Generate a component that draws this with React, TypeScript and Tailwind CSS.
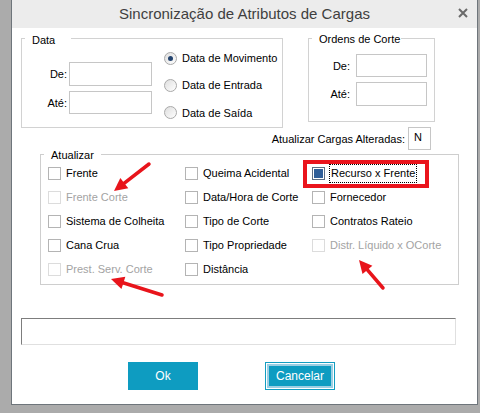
import React from "react"

type Item = { label: string; disabled?: boolean; checked?: boolean; highlight?: boolean }

const col1: Item[] = [
  { label: "Frente" },
  { label: "Frente Corte", disabled: true },
  { label: "Sistema de Colheita" },
  { label: "Cana Crua" },
  { label: "Prest. Serv. Corte", disabled: true },
]

const col2: Item[] = [
  { label: "Queima Acidental" },
  { label: "Data/Hora de Corte" },
  { label: "Tipo de Corte" },
  { label: "Tipo Propriedade" },
  { label: "Distância" },
]

const col3: Item[] = [
  { label: "Recurso x Frente", checked: true, highlight: true },
  { label: "Fornecedor" },
  { label: "Contratos Rateio" },
  { label: "Distr. Líquido x OCorte", disabled: true },
]

const Checkbox = ({ item }: { item: Item }) => (
  <div className="relative flex h-[24px] items-center gap-[5px]">
    {item.checked ? (
      <span className="box-border flex h-[13px] w-[13px] border border-[#5d6d82] bg-white p-[1px]">
        <span className="h-full w-full bg-[#2f5e98]" />
      </span>
    ) : (
      <span
        className={`box-border h-[13px] w-[13px] border bg-white ${
          item.disabled ? "border-[#dcdcdc]" : "border-[#b4b4b4]"
        }`}
      />
    )}
    {item.highlight ? (
      <span className="-ml-[1px] border border-dotted border-black px-[1px] leading-[17px] text-black">
        {item.label}
      </span>
    ) : (
      <span className={item.disabled ? "text-[#a3a3a3]" : "text-black"}>{item.label}</span>
    )}
    {item.highlight && (
      <span className="pointer-events-none absolute -left-[9px] -top-[1px] h-[28px] w-[126px] border-4 border-[#ea141c]" />
    )}
  </div>
)

const Radio = ({ label, selected }: { label: string; selected?: boolean }) => (
  <div className="flex items-center gap-[5px]">
    <span className="flex h-[13px] w-[13px] items-center justify-center rounded-full border border-[#a9a9a9] bg-gradient-to-br from-[#dedede] to-white">
      {selected && <span className="h-[5px] w-[5px] rounded-full bg-[#23436e]" />}
    </span>
    <span className="text-black">{label}</span>
  </div>
)

const Field = ({ w, h = 23 }: { w: string; h?: number }) => (
  <div className={`${w} ${h === 24 ? "h-[24px]" : "h-[23px]"} border border-[#c6c6c6] bg-white`} />
)

// arrow from tail to tip, head drawn as triangle
const Arrow = ({ x1, y1, x2, y2 }: { x1: number; y1: number; x2: number; y2: number }) => {
  const dx = x2 - x1
  const dy = y2 - y1
  const len = Math.sqrt(dx * dx + dy * dy)
  const ux = dx / len
  const uy = dy / len
  const hl = 13
  const hw = 6.5
  const bx = x2 - ux * hl
  const by = y2 - uy * hl
  const pts = `${x2},${y2} ${bx - uy * hw},${by + ux * hw} ${bx + uy * hw},${by - ux * hw}`
  return (
    <g>
      <line x1={x1} y1={y1} x2={bx + ux * 2} y2={by + uy * 2} stroke="#e8141b" strokeWidth={3.5} strokeLinecap="round" />
      <polygon points={pts} fill="#e8141b" />
    </g>
  )
}

export default function App() {
  return (
    <div className="relative h-[413px] w-[480px] overflow-hidden bg-[#ababab] pl-[11px] font-['Liberation_Sans',Arial,sans-serif] text-[11px] leading-[14px]">
      <div className="flex h-[405px] w-[467px] flex-col border-x border-b border-[#6e757b] bg-white">
        {/* Title bar */}
        <div className="relative flex h-[28px] shrink-0 items-center justify-center bg-[#ececec]">
          <span className="text-[15px] text-[#3f3f3f]">Sincronização de Atributos de Cargas</span>
          <svg className="absolute right-[9px] top-[8px]" width="10" height="10" viewBox="0 0 10 10">
            <path d="M1 1 L9 9 M9 1 L1 9" stroke="#6a6a6a" strokeWidth="2" />
          </svg>
        </div>

        {/* Data + Ordens */}
        <div className="mt-[10px] flex items-start">
          <div className="relative ml-[9px] flex h-[90px] w-[262px] border border-[#d2d2d2]">
            <span className="absolute -top-[6px] left-[3px] bg-white pl-[7px] pr-[16px] text-black">Data</span>
            <div className="flex flex-col gap-[5px] pt-[23px]">
              <div className="flex items-center gap-[2px]">
                <span className="w-[45px] text-right">De:</span>
                <Field w="w-[83px]" h={24} />
              </div>
              <div className="flex items-center gap-[2px]">
                <span className="w-[45px] text-right">Até:</span>
                <Field w="w-[83px]" />
              </div>
            </div>
            <div className="ml-[12px] flex flex-col pt-[6px]">
              <div className="flex h-[27px] items-center">
                <Radio label="Data de Movimento" selected />
              </div>
              <div className="flex h-[28px] items-center">
                <Radio label="Data de Entrada" />
              </div>
              <div className="flex h-[29px] items-center">
                <Radio label="Data de Saída" />
              </div>
            </div>
          </div>

          <div className="relative ml-[25px] flex h-[84px] w-[127px] flex-col gap-[5px] border border-[#d2d2d2] pt-[15px]">
            <span className="absolute -top-[7px] left-[3px] bg-white pl-[7px] pr-[1px] text-black">Ordens de Corte</span>
            <div className="flex items-center gap-[6px]">
              <span className="w-[41px] text-right">De:</span>
              <Field w="w-[71px]" />
            </div>
            <div className="flex items-center gap-[6px]">
              <span className="w-[41px] text-right">Até:</span>
              <Field w="w-[71px]" h={24} />
            </div>
          </div>
        </div>

        {/* Atualizar Cargas Alteradas */}
        <div className="-mt-[1px] flex items-center justify-end gap-[3px] pr-[46px]">
          <span className="text-black">Atualizar Cargas Alteradas:</span>
          <div className="h-[23px] w-[23px] border border-[#c6c6c6] pl-[5px] pt-[2px] text-black">N</div>
        </div>

        {/* Atualizar group */}
        <div className="relative ml-[28px] mt-[4px] h-[131px] w-[419px] border border-[#cecece] pl-[7px] pt-[6px]">
          <span className="absolute -top-[7px] left-[3px] bg-white px-[7px] text-black">Atualizar</span>
          <div className="flex">
            <div className="flex w-[137px] flex-col">
              {col1.map((it) => (
                <Checkbox key={it.label} item={it} />
              ))}
            </div>
            <div className="flex w-[127px] flex-col">
              {col2.map((it) => (
                <Checkbox key={it.label} item={it} />
              ))}
            </div>
            <div className="flex flex-col">
              {col3.map((it) => (
                <Checkbox key={it.label} item={it} />
              ))}
            </div>
          </div>
        </div>

        {/* Message box */}
        <div className="ml-[9px] mt-[33px] h-[27px] w-[435px] border border-b-[#e0e0e0] border-l-[#7d7d7d] border-r-[#e0e0e0] border-t-[#7d7d7d] bg-white" />

        {/* Buttons */}
        <div className="ml-[116px] mt-[17px] flex gap-[67px]">
          <button className="flex h-[28px] w-[70px] items-center justify-center bg-[#0e9cc1] text-[12px] text-white">
            Ok
          </button>
          <button className="h-[28px] w-[70px] border border-[#139dc1] bg-white p-[1px]">
            <span className="flex h-full w-full items-center justify-center border-2 border-[#9ccfe3] bg-[#0e9cc1] text-[12px] text-white">
              Cancelar
            </span>
          </button>
        </div>
      </div>

      {/* annotation arrows */}
      <svg className="pointer-events-none absolute left-0 top-0" width="480" height="413">
        <Arrow x1={149} y1={164} x2={114} y2={191} />
        <Arrow x1={162} y1={295} x2={111} y2={279} />
        <Arrow x1={383} y1={288} x2={359} y2={260} />
      </svg>
    </div>
  )
}
